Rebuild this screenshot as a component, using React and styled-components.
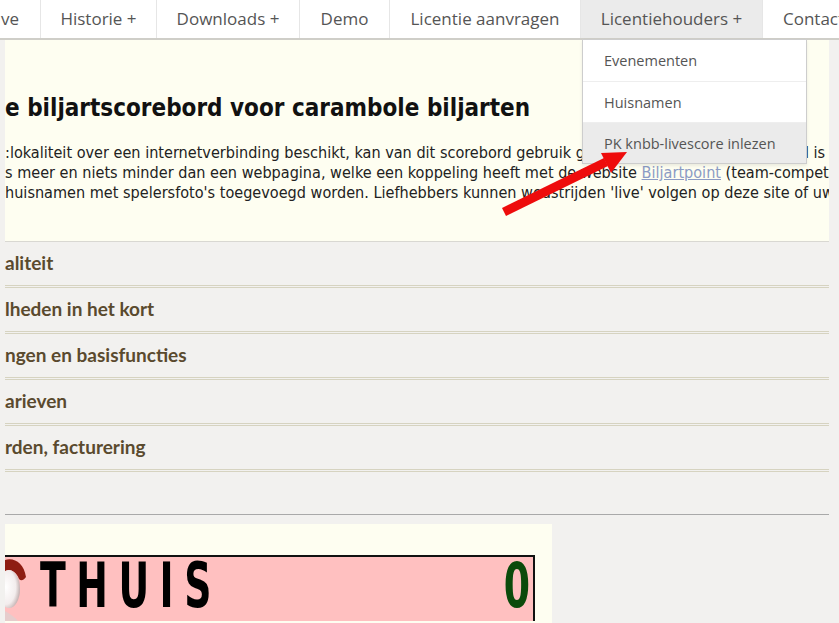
import React from "react";
import styled, { createGlobalStyle } from "styled-components";

const GlobalStyle = createGlobalStyle`
  html, body { margin: 0; padding: 0; }
  body {
    width: 839px;
    height: 623px;
    overflow: hidden;
    background: #f2f1ef;
    font-family: "Open Sans", "Liberation Sans", sans-serif;
  }
  * { box-sizing: border-box; }
`;

const Page = styled.div`
  position: relative;
  width: 839px;
  height: 623px;
  overflow: hidden;
`;

const NavBar = styled.nav`
  position: relative;
  display: flex;
  height: 40px;
  background: #fff;
  border-bottom: 2px solid #cfcec8;
  z-index: 2;
`;

const NavItem = styled.div`
  flex: 0 0 ${(p) => p.$w}px;
  display: flex;
  align-items: center;
  justify-content: ${(p) => (p.$align === "right" ? "flex-end" : p.$align === "left" ? "flex-start" : "center")};
  padding: ${(p) => (p.$align === "right" ? "0 21px 1px 0" : p.$align === "left" ? "0 0 1px 20px" : "0 0 1px 0")};
  border-right: ${(p) => (p.$last ? "none" : "1px solid #e6e6e6")};
  background: ${(p) => (p.$active ? "#ebebeb" : "#fff")};
  color: #555;
  font-size: 17px;
  white-space: nowrap;
`;

const Dropdown = styled.ul`
  position: absolute;
  left: 582px;
  top: 39px;
  width: 225px;
  margin: 0;
  padding: 0;
  list-style: none;
  background: #fff;
  border: 1px solid #cdcdcd;
  box-shadow: 0 2px 3px rgba(0, 0, 0, 0.08);
`;

const DropItem = styled.li`
  height: 41px;
  display: flex;
  align-items: center;
  padding-left: 21px;
  font-size: 14.5px;
  color: #555;
  background: ${(p) => (p.$hover ? "#ebebeb" : "#fff")};
  border-top: ${(p) => (p.$first ? "none" : "1px solid #eeeeee")};
`;

const Column = styled.main`
  margin-left: 5px;
  width: 824px;
`;

const Intro = styled.section`
  height: 201px;
  background: #fefef1;
  padding-top: 53px;
  font-family: "DejaVu Sans Condensed", "DejaVu Sans", sans-serif;
  font-stretch: condensed;
  overflow: hidden;
`;

const Title = styled.h1`
  margin: 0;
  font-size: 24px;
  line-height: 30px;
  font-weight: bold;
  color: #111;
  white-space: nowrap;
`;

const Para = styled.p`
  margin: 20px 0 0 0;
  font-size: 16.1px;
  line-height: 20px;
  color: #222;
  white-space: nowrap;
`;

const Link = styled.a`
  color: #8b9bc4;
  text-decoration: underline;
`;

const Accordion = styled.section`
  border-top: 1px solid #d9d8d2;
`;

const AccRow = styled.div`
  height: 46px;
  display: flex;
  align-items: center;
  padding-bottom: 3px;
  border-bottom: 3px double #d6d3c0;
  font-family: "Lato", "Open Sans", sans-serif;
  font-weight: bold;
  font-size: 19px;
  color: #5a4a2e;
  white-space: nowrap;
`;

const Rule = styled.hr`
  margin: 42px 0 9px 0;
  border: 0;
  border-top: 1px solid #a9a9a9;
`;

const ScoreCard = styled.section`
  width: 547px;
  height: 100px;
  background: #fefef1;
  padding-top: 31px;
`;

const Board = styled.div`
  width: 530px;
  height: 66px;
  background: #ffc0c0;
  border-top: 2px solid #111;
  border-right: 2px solid #111;
  display: flex;
  align-items: center;
  overflow: hidden;
`;

const BoardText = styled.span`
  font-family: "Liberation Sans Narrow", "DejaVu Sans Condensed", sans-serif;
  font-weight: bold;
  font-size: 42px;
  line-height: 1;
  letter-spacing: ${(p) => p.$spacing}px;
  color: ${(p) => p.$color};
  transform: scaleY(1.5);
  margin-left: ${(p) => p.$ml};
  margin-right: ${(p) => p.$mr || "0"};
  margin-top: -6px;
`;

const Overlay = styled.svg`
  position: absolute;
  left: 0;
  top: 0;
  z-index: 5;
  pointer-events: none;
`;

const Avatar = () => (
  <svg width="22" height="64" viewBox="0 0 22 64">
    <defs>
      <radialGradient id="face" cx="0.35" cy="0.45" r="0.7">
        <stop offset="0" stopColor="#ffffff" />
        <stop offset="0.65" stopColor="#f3eded" />
        <stop offset="1" stopColor="#b9a4a4" />
      </radialGradient>
    </defs>
    <path d="M0 3 C9 0 19 6 21 20 C18 24 16 24 14 22 C11 14 5 12 0 14 Z" fill="#8e1d12" />
    <ellipse cx="4" cy="32" rx="11" ry="19" fill="url(#face)" />
    <path d="M0 54 C5 57 10 60 13 64 L0 64 Z" fill="#e6cccc" />
  </svg>
);

const navItems = [
  { t: "ve", w: 41, align: "right" },
  { t: "Historie +", w: 116 },
  { t: "Downloads +", w: 143 },
  { t: "Demo", w: 90 },
  { t: "Licentie aanvragen", w: 191 },
  { t: "Licentiehouders +", w: 182, active: true },
  { t: "Contact", w: 120, align: "left", last: true },
];

const accordion = [
  "aliteit",
  "lheden in het kort",
  "ngen en basisfuncties",
  "arieven",
  "rden, facturering",
];

export default function App() {
  return (
    <Page>
      <GlobalStyle />
      <NavBar>
        {navItems.map((n) => (
          <NavItem key={n.t} $w={n.w} $align={n.align} $active={n.active} $last={n.last}>
            {n.t}
          </NavItem>
        ))}
        <Dropdown>
          <DropItem $first>Evenementen</DropItem>
          <DropItem>Huisnamen</DropItem>
          <DropItem $hover>PK knbb-livescore inlezen</DropItem>
        </Dropdown>
      </NavBar>
      <Column>
        <Intro>
          <Title>e biljartscorebord voor carambole biljarten</Title>
          <Para>
            :lokaliteit over een internetverbinding beschikt, kan van dit scorebord gebruik gemaakt worden. Het scorebord is hoe
            <br />
            s meer en niets minder dan een webpagina, welke een koppeling heeft met de website <Link>Biljartpoint</Link> (team-competitie
            <br />
            huisnamen met spelersfoto's toegevoegd worden. Liefhebbers kunnen wedstrijden 'live' volgen op deze site of uw
          </Para>
        </Intro>
        <Accordion>
          {accordion.map((a) => (
            <AccRow key={a}>{a}</AccRow>
          ))}
        </Accordion>
        <Rule />
        <ScoreCard>
          <Board>
            <Avatar />
            <BoardText $color="#000" $spacing={10.5} $ml="13px">THUIS</BoardText>
            <BoardText $color="#0b4a0b" $spacing={0} $ml="auto" $mr="3px">0</BoardText>
          </Board>
        </ScoreCard>
      </Column>
      <Overlay width="839" height="623" viewBox="0 0 839 623">
        <line x1="504" y1="212" x2="606" y2="162" stroke="#ee0c0c" strokeWidth="9" />
        <polygon points="627,152 611,173 601,153" fill="#ee0c0c" />
      </Overlay>
    </Page>
  );
}
